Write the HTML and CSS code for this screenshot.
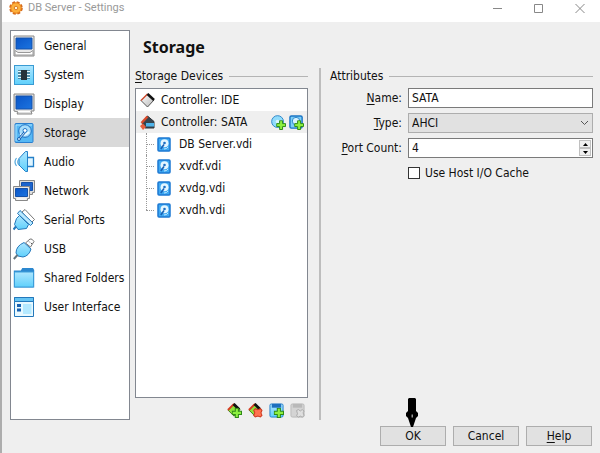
FILE: index.html
```html
<!DOCTYPE html>
<html lang="en">
<head>
<meta charset="utf-8">
<title>DB Server - Settings</title>
<link rel="stylesheet" href="styles.css">
</head>
<body>
<svg class="defs" aria-hidden="true">
  <defs>
    <linearGradient id="sky" x1="0" y1="0" x2="0" y2="1"><stop offset="0" stop-color="#aee6ff"/><stop offset="1" stop-color="#5fd0fb"/></linearGradient>
    <linearGradient id="screen" x1="0" y1="0" x2="1" y2="1"><stop offset="0" stop-color="#0a55c8"/><stop offset="1" stop-color="#1c74e0"/></linearGradient>
    <linearGradient id="steel" x1="0" y1="0" x2="1" y2="1"><stop offset="0" stop-color="#ffffff"/><stop offset="1" stop-color="#b8b8b8"/></linearGradient>
    <symbol id="disk" viewBox="0 0 22 22">
      <rect x="2" y="1.500" width="18" height="19" rx="1" fill="#56b8f4" stroke="#2a7fd0"/>
      <path d="M3 19V3h16" fill="none" stroke="#a9e2ff"/>
      <circle cx="12" cy="9" r="6.300" fill="#a6dcfb" stroke="#1c6fc4"/>
      <path d="M7 12q4 3 9-2" fill="none" stroke="#e6f8ff" stroke-width="2"/>
      <circle cx="12" cy="8.500" r="2" fill="#fff" stroke="#2377c9"/>
      <path d="M11.500 10.500L6 17" stroke="#1760b4" stroke-width="2.600"/>
      <path d="M11.500 10.500L6 17" stroke="#d8f1ff" stroke-width="1"/>
      <circle cx="6" cy="17" r="1.500" fill="#d8f1ff" stroke="#1760b4"/>
    </symbol>
    <symbol id="disk-small" viewBox="0 0 14 15">
      <rect x="1" y="1" width="12" height="13" rx="1" fill="#3fa9f2" stroke="#1c78d2" stroke-width="1.500"/>
      <circle cx="7.500" cy="6.200" r="4" fill="#e4f6ff"/>
      <circle cx="7.500" cy="6" r="1.300" fill="#1c6fc4"/>
      <path d="M7 7.500L3.800 12" stroke="#1760b4" stroke-width="1.600"/>
      <path d="M7 12q3 0 4-2" fill="none" stroke="#bfe8ff"/>
    </symbol>
    <symbol id="plus" viewBox="0 0 10 10">
      <path d="M3.500.5h3v3h3v3h-3v3h-3v-3h-3v-3h3z" fill="#8df03f" stroke="#2f8a17"/>
    </symbol>
    <symbol id="cross" viewBox="0 0 10 10">
      <path d="M1 2.500L2.500 1 5 2 7.500 1 9 2.500 8 5l1 2.500L7.500 9 5 8 2.500 9 1 7.500 2 5z" fill="#ff7350" stroke="#cf3a22"/>
    </symbol>
    <symbol id="chip" viewBox="0 0 15 15">
      <path d="M1 7.500L7.500 1 14 7 7.500 14z" fill="url(#steel)" stroke="#555"/>
      <path d="M1 7.500L7.500 1" stroke="#d85135" stroke-width="1.500"/>
      <path d="M7.500 1L14 7" stroke="#111" stroke-width="2.500"/>
    </symbol>
    <symbol id="chip-green" viewBox="0 0 15 15">
      <path d="M1 7.500L7.500 1 14 7 7.500 14z" fill="#8ee23a" stroke="#3b7a1b"/>
      <path d="M1 7.500L7.500 1" stroke="#d63c20" stroke-width="2"/>
      <path d="M7 1L13 7" stroke="#111" stroke-width="3"/>
    </symbol>
  </defs>
</svg>

<div class="window">
  <header class="titlebar">
    <svg class="gear" viewBox="0 0 16 16" aria-hidden="true">
      <circle cx="8" cy="8" r="6.500" fill="#f79a28" stroke="#d4691a" stroke-width="2.500" stroke-dasharray="3.300 1.805"/>
      <circle cx="8" cy="8" r="5.800" fill="#fdb13c" stroke="#ee8a22"/>
      <circle cx="8" cy="8" r="2" fill="#fff4d8" stroke="#d4701c"/>
    </svg>
    <span class="title">DB Server - Settings</span>
    <div class="caption">
      <button type="button" aria-label="Minimize"><svg viewBox="0 0 10 10"><path d="M0 5.500h9"/></svg></button>
      <button type="button" aria-label="Maximize"><svg viewBox="0 0 10 10"><path d="M.5 1.500h8v8h-8z"/></svg></button>
      <button type="button" aria-label="Close"><svg viewBox="0 0 10 10"><path d="M.5 1l9 9M9.500 1l-9 9"/></svg></button>
    </div>
  </header>

  <div class="body">
    <nav class="sections">
      <button type="button"><svg viewBox="0 0 22 22">
        <path d="M1 1h20v20H1z" fill="#e8e8e8" stroke="#888"/>
        <path d="M3 3h16v11H3z" fill="url(#screen)" stroke="#1450a8"/>
        <path d="M2 15.500l3 2h12l3-2v4.500H2z" fill="#fff" stroke="#999"/></svg>General</button>
      <button type="button"><svg viewBox="0 0 22 22">
        <rect x="1.500" y="1.500" width="19" height="19" fill="url(#sky)" stroke="#399bd3"/>
        <path d="M5 7.500h12M5 10.500h12M5 13.500h12" stroke="#3c718c" stroke-width="2.500"/>
        <path d="M5 7.500h12M5 10.500h12M5 13.500h12" stroke="#e6fbff"/>
        <rect x="8" y="6" width="6" height="10" fill="#26333b"/></svg>System</button>
      <button type="button"><svg viewBox="0 0 22 22">
        <path d="M1 1h20v17h-3l1 3H4l1-2-4-1z" fill="#e0e0e0" stroke="#888"/>
        <path d="M3 3h16v13H3z" fill="url(#screen)" stroke="#1450a8"/>
        <path d="M5 18.500h12" stroke="#fff"/></svg>Display</button>
      <button type="button" class="current" aria-current="page"><svg viewBox="0 0 22 22"><use href="#disk"/></svg>Storage</button>
      <button type="button"><svg viewBox="0 0 22 22">
        <path d="M14 6.500h6.500v9H14z" fill="#dff5ff" stroke="#2580c8" stroke-width="1.300"/>
        <path d="M6 7.500L12.500.5h2v20h-2L6 14z" fill="url(#sky)" stroke="#2580c8"/>
        <path d="M3.500 7Q.5 11 3.500 15M6 8Q3.500 11 6 14" fill="none" stroke="#55a8dc" stroke-width="1.200"/></svg>Audio</button>
      <button type="button"><svg viewBox="0 0 22 22">
        <path d="M6.500.5h15v12h-2v2h-13z" fill="#ddd" stroke="#888"/><path d="M8.500 2.500h11v8h-11z" fill="#1b63cd" stroke="#1450a8"/>
        <path d="M.5 6.500h16v12h-2v2h-12v-2h-2z" fill="#e8e8e8" stroke="#888"/><path d="M2.500 8.500h12v8h-12z" fill="url(#screen)" stroke="#1450a8"/>
        <path d="M4 19h9" stroke="#fff"/></svg>Network</button>
      <button type="button"><svg viewBox="0 0 22 22">
        <path d="M9 3l3-2.500 9.500 10L18 14z" fill="#fff" stroke="#777"/>
        <path d="M7 1.500L20 14l-2.500 2.500L4.500 4.500z" fill="#b9e9ff" stroke="#2478bb"/>
        <path d="M6.500 6.500l9 9-2 4-8.500 1-3.500-5 2-6z" fill="url(#sky)" stroke="#2478bb"/>
        <path d="M3 17.500L.5 20.500" stroke="#2478bb" stroke-width="2"/></svg>Serial Ports</button>
      <button type="button"><svg viewBox="0 0 22 22">
        <path d="M12.500 5l4.500-4q2-.8 4 2.500L17.500 9z" fill="#fff" stroke="#777"/><path d="M16 3.500l1 1M18 5l1 1" stroke="#555"/>
        <path d="M11 4.500L18 11q-2 7-8 8l-5-1-2-3q0-7 8-10.500z" fill="url(#sky)" stroke="#2478bb"/>
        <path d="M4.500 17L.8 21" stroke="#65757e" stroke-width="2"/></svg>USB</button>
      <button type="button"><svg viewBox="0 0 22 22">
        <path d="M.8 3.500h7l1.500-2.500H20l1.200 2v17.500H.8z" fill="#2c88cf"/>
        <path d="M1.500 5h19v15h-19z" fill="url(#sky)" stroke="#3c9eda"/></svg>Shared Folders</button>
      <button type="button"><svg viewBox="0 0 22 22">
        <path d="M1.500 1.500h19v19h-19z" fill="#e8f9ff" stroke="#2478bb"/><path d="M1.500 1.500h19v4h-19z" fill="#65c4f3" stroke="#2478bb"/>
        <path d="M4 8h4v3H4zM4 12.500h4v3H4z" fill="#1761b1"/><path d="M10 8h8.500v10H10z" fill="#b4e9ff"/></svg>User Interface</button>
    </nav>

    <main class="page">
      <h1>Storage</h1>
      <div class="columns">
        <section class="devices">
          <h2 class="group"><span><u>S</u>torage Devices</span></h2>
          <ul class="tree">
            <li class="row"><svg class="chip" viewBox="0 0 15 15"><use href="#chip"/></svg><span class="name">Controller: IDE</span></li>
            <li class="row selected">
              <svg class="chip" viewBox="0 0 15 15"><path d="M2 8L7.500 1 14 6.500V13H5z" fill="#38454e" stroke="#30343a"/><path d="M1.500 8L7.500 1.500" stroke="#d84a2c" stroke-width="2.500"/><path d="M6 8h8v3.500H6z" fill="#4fb4ea"/><path d="M0 11l3-2.500L6 12l-3 3z" fill="#e8603f"/></svg>
              <span class="name">Controller: SATA</span>
              <button type="button" aria-label="Add optical drive"><svg viewBox="0 0 16 16"><circle cx="7" cy="7" r="6.300" fill="#91dcfb" stroke="#2682c8"/><circle cx="7" cy="7" r="2" fill="#d8f5ff"/><use href="#plus" x="5.500" y="5.500" width="10.500" height="10.500"/></svg></button>
              <button type="button" aria-label="Add hard disk"><svg viewBox="0 0 16 16"><rect x="1" y="1" width="13" height="13" rx="1.500" fill="#7ccff8" stroke="#1b75c5" stroke-width="1.500"/><circle cx="7.500" cy="6.500" r="4" fill="#d8f4ff" stroke="#2682c8"/><use href="#plus" x="5.500" y="5.500" width="10.500" height="10.500"/></svg></button>
            </li>
            <li>
              <ul class="branch">
                <li class="row"><svg class="vdi" viewBox="0 0 14 15"><use href="#disk-small"/></svg>DB Server.vdi</li>
                <li class="row"><svg class="vdi" viewBox="0 0 14 15"><use href="#disk-small"/></svg>xvdf.vdi</li>
                <li class="row"><svg class="vdi" viewBox="0 0 14 15"><use href="#disk-small"/></svg>xvdg.vdi</li>
                <li class="row"><svg class="vdi" viewBox="0 0 14 15"><use href="#disk-small"/></svg>xvdh.vdi</li>
              </ul>
            </li>
          </ul>
          <div class="tools">
            <button type="button" aria-label="Add controller"><svg viewBox="0 0 16 16"><use href="#chip-green" width="15" height="15"/><use href="#plus" x="5" y="5" width="11" height="11"/></svg></button>
            <button type="button" aria-label="Remove controller"><svg viewBox="0 0 16 16"><use href="#chip-green" width="15" height="15"/><use href="#cross" x="5" y="5" width="11" height="11"/></svg></button>
            <button type="button" aria-label="Add attachment"><svg viewBox="0 0 16 16"><rect x="1" y="1" width="14" height="14" rx="1.500" fill="url(#sky)" stroke="#217dca"/><path d="M3 1h10v4H3z" fill="#1d6fbe"/><use href="#plus" x="5" y="5" width="11" height="11"/></svg></button>
            <button type="button" aria-label="Remove attachment" disabled><svg viewBox="0 0 16 16"><rect x="1" y="1" width="14" height="14" rx="1.500" fill="#d4d4d4" stroke="#b9b9b9"/><path d="M3 1h10v4H3z" fill="#b9b9b9"/><path d="M7 8l2-1 2 1.500L13 7l2 1.500-1 2 1 3-2 1.500-2-1-2 1-2-1.500 1-2z" fill="#dfdfdf" stroke="#aaa"/></svg></button>
          </div>
        </section>

        <section class="attributes">
          <h2 class="group"><span>Attributes</span></h2>
          <form class="fields">
            <label for="name"><u>N</u>ame:</label>
            <input class="box" id="name" type="text" value="SATA">
            <label for="type"><u>T</u>ype:</label>
            <div class="combo">
              <select class="box" id="type"><option>AHCI</option></select>
              <svg viewBox="0 0 9 6" aria-hidden="true"><path d="M1 1l3.500 3.500L8 1"/></svg>
            </div>
            <label for="ports"><u>P</u>ort Count:</label>
            <div class="box spin">
              <input id="ports" type="number" value="4">
              <div class="steps">
                <button type="button" aria-label="Increase"><svg viewBox="0 0 5 3"><path d="M0 3L2.500 0 5 3z"/></svg></button>
                <button type="button" aria-label="Decrease"><svg viewBox="0 0 5 3"><path d="M0 0h5L2.500 3z"/></svg></button>
              </div>
            </div>
            <label class="check"><input type="checkbox">Use Host I/O Cache</label>
          </form>
        </section>
      </div>
    </main>
  </div>

  <footer class="actions">
    <button type="button">OK
      <svg class="pointer" viewBox="0 0 12 29" aria-hidden="true"><path d="M2 1l1-1h6l1 1v12l2 2v3l-2 2-3 9H5l-3-9-2-2v-3l2-2z"/><path d="M5.500 16.500H7v3H5.500z" fill="#999"/></svg>
    </button>
    <button type="button">Cancel</button>
    <button type="button"><span><u>H</u>elp</span></button>
  </footer>
</div>
</body>
</html>
```
FILE: styles.css
```css
* {
  box-sizing: border-box;
}

body {
  margin: 0;
  background: #efefef;
  color: #111;
  font: 12px/16px "DejaVu Sans Condensed", "DejaVu Sans", sans-serif;
}

button,
input,
select {
  margin: 0;
  padding: 0;
  border: 0;
  background: none;
  color: inherit;
  font: inherit;
}

svg {
  display: block;
  flex: none;
}

ul {
  margin: 0;
  padding: 0;
  list-style: none;
}

u {
  text-underline-offset: 2px;
}

.defs {
  position: absolute;
  width: 0;
  height: 0;
}

.window {
  display: flex;
  flex-direction: column;
  min-height: 100vh;
  border-left: 2px solid #adadad;
}

.titlebar {
  display: flex;
  align-items: center;
  height: 22px;
  padding: 0 28px 7px 7px;
  background: #fff;
  color: #999;
  font: 11px/15px Roboto, "Open Sans", sans-serif;
}

.gear {
  width: 14px;
  height: 14px;
  margin-right: 5px;
}

.title {
  flex: 1;
}

.caption {
  display: flex;
  gap: 31px;
}

.titlebar {
  padding-right: 15px;
}

.caption svg {
  width: 10px;
  height: 10px;
  fill: none;
  stroke: #888;
}

.body {
  display: flex;
  flex: 1;
  gap: 5px;
  padding: 8px 7px 0 8px;
}

.sections {
  flex: 0 0 120px;
  border: 1px solid #828790;
  background: #fff;
}

.sections button {
  display: flex;
  align-items: center;
  gap: 9px;
  width: 100%;
  height: 29px;
  padding-left: 2px;
  white-space: nowrap;
}

.sections .current {
  background: #d9d9d9;
}

.sections svg {
  width: 22px;
  height: 22px;
}

.page {
  display: flex;
  flex: 1;
  flex-direction: column;
}

h1 {
  margin: 6px 0 10px 8px;
  font: bold 16px/22px "Noto Sans", "Open Sans", sans-serif;
}

.columns {
  display: flex;
  flex: 1;
}

.devices {
  display: flex;
  flex: 0 0 186px;
  flex-direction: column;
  padding-right: 11px;
  border-right: 2px solid #bdbdbd;
}

.group {
  display: flex;
  align-items: center;
  gap: 6px;
  margin: 0 0 4px;
  font-size: 12px;
  font-weight: normal;
  line-height: 16px;
}

.group::after {
  flex: 1;
  height: 1px;
  background: #b4b4b4;
  content: "";
}

.tree {
  flex: 1;
  border: 1px solid #828790;
  background: #fff;
}

.row {
  display: flex;
  align-items: center;
  height: 22px;
}

.tree > .row {
  gap: 3px;
  padding: 0 3px 0 4px;
}

.selected {
  background: #efefef;
}

.chip {
  width: 15px;
  height: 15px;
}

.name {
  flex: 1;
  padding-left: 3px;
}

.selected button svg,
.tools svg {
  width: 15px;
  height: 15px;
}

.branch {
  margin-left: 10px;
}

.branch .row {
  position: relative;
  gap: 8px;
  padding-left: 11px;
}

.branch .row::before {
  position: absolute;
  top: 0;
  bottom: 0;
  left: 0;
  border-left: 1px dotted #999;
  content: "";
}

.branch .row:last-child::before {
  bottom: 50%;
}

.branch .row::after {
  position: absolute;
  top: 50%;
  left: 0;
  width: 8px;
  border-top: 1px dotted #999;
  content: "";
}

.vdi {
  width: 14px;
  height: 15px;
}

.tools {
  display: flex;
  gap: 6px;
  justify-content: flex-end;
  padding: 5px 3px 2px 0;
}

.attributes {
  flex: 1;
  padding-left: 9px;
}

.fields {
  display: grid;
  grid-template-columns: 72px 1fr;
  gap: 5px 6px;
  align-items: center;
}

.fields > label {
  text-align: right;
}

.box {
  width: 100%;
  height: 20px;
  padding: 0 3px;
  border: 1px solid #7a7a7a;
  background: #fff;
}

.combo {
  position: relative;
}

.combo select {
  display: block;
  border-color: #adadad;
  background: #e1e1e1;
  appearance: none;
}

.combo svg {
  position: absolute;
  top: 7px;
  right: 4px;
  width: 9px;
  height: 6px;
  fill: none;
  stroke: #555;
  pointer-events: none;
}

.spin {
  display: flex;
  padding: 1px 1px 1px 3px;
}

.spin input {
  flex: 1;
  min-width: 0;
  appearance: textfield;
}

.steps {
  display: flex;
  flex-direction: column;
  width: 12px;
}

.steps button {
  display: grid;
  flex: 1;
  place-items: center;
  border: 1px solid #c0c0c0;
  background: #f0f0f0;
}

.steps svg {
  width: 5px;
  height: 3px;
}

.fields .check {
  display: flex;
  grid-column: 2;
  gap: 5px;
  align-items: center;
  margin-top: 2px;
}

.check input {
  width: 12px;
  height: 12px;
  border: 1px solid #333;
  background: #fff;
  appearance: none;
}

.check input:checked {
  background: #333;
}

.actions {
  display: flex;
  gap: 7px;
  justify-content: flex-end;
  padding: 6px 8px 7px;
}

.actions button {
  position: relative;
  width: 66px;
  height: 20px;
  border: 1px solid #adadad;
  background: #e1e1e1;
}

.pointer {
  position: absolute;
  bottom: 100%;
  left: 25px;
  width: 12px;
  height: 29px;
}
```
